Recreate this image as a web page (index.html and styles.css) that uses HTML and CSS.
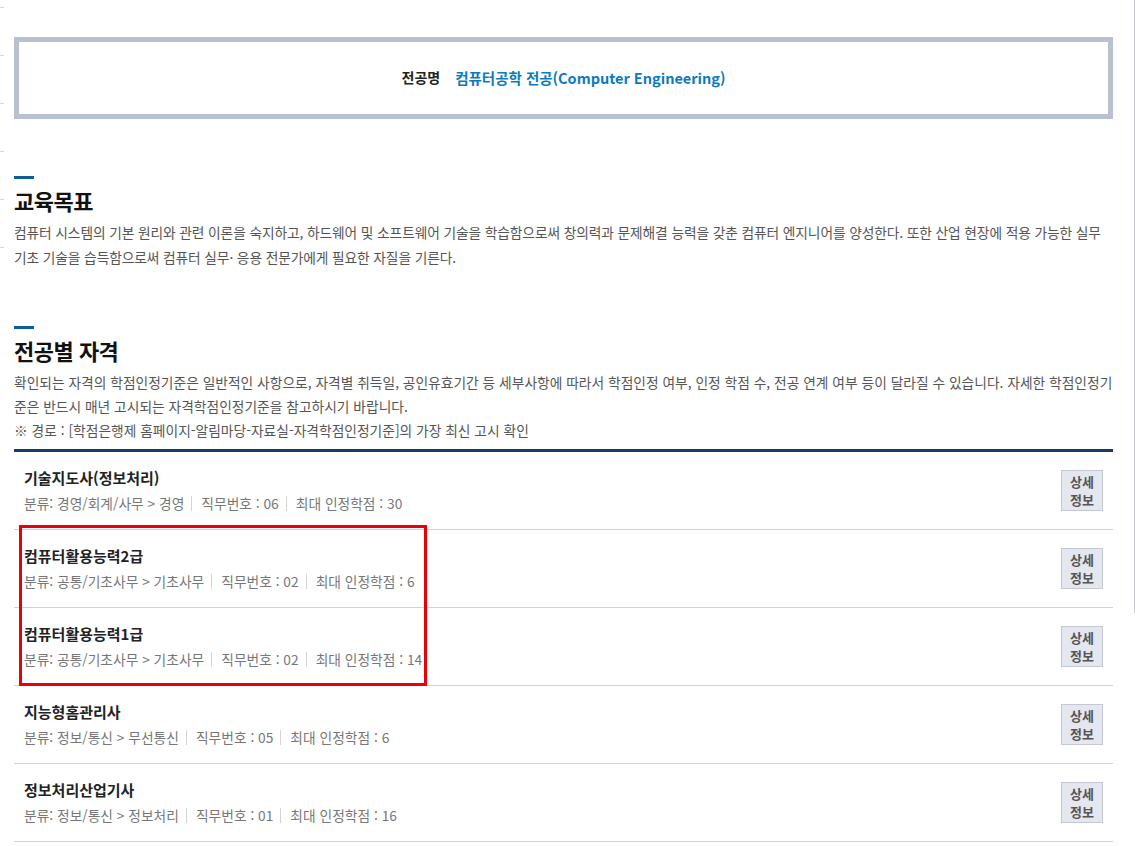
FILE: index.html
```html
<!DOCTYPE html>
<html lang="ko">
<head>
    <meta charset="UTF-8">
    <meta name="viewport" content="width=device-width, initial-scale=1.0">
    <title>전공별 자격</title>
    <link rel="stylesheet" href="styles.css">
</head>
<body>
    <div class="page">
        <div class="edge-ticks"></div>

        <div class="content">
            <div class="major-box">
                <span class="major-label">전공명</span>
                <span class="major-name">컴퓨터공학 전공(Computer Engineering)</span>
            </div>

            <div class="section goal">
                <h2 class="section-title">교육목표</h2>
                <p class="section-text">컴퓨터 시스템의 기본 원리와 관련 이론을 숙지하고, 하드웨어 및 소프트웨어 기술을 학습함으로써 창의력과 문제해결 능력을 갖춘 컴퓨터 엔지니어를 양성한다. 또한 산업 현장에 적용 가능한 실무 기초 기술을 습득함으로써 컴퓨터 실무· 응용 전문가에게 필요한 자질을 기른다.</p>
            </div>

            <div class="section license">
                <h2 class="section-title">전공별 자격</h2>
                <p class="section-text">확인되는 자격의 학점인정기준은 일반적인 사항으로, 자격별 취득일, 공인유효기간 등 세부사항에 따라서 학점인정 여부, 인정 학점 수, 전공 연계 여부 등이 달라질 수 있습니다. 자세한 학점인정기준은 반드시 매년 고시되는 자격학점인정기준을 참고하시기 바랍니다.<br>※ 경로 : [학점은행제 홈페이지-알림마당-자료실-자격학점인정기준]의 가장 최신 고시 확인</p>

                <ul class="cert-list">
                    <li class="cert-item">
                        <div class="cert-info">
                            <strong class="cert-name">기술지도사(정보처리)</strong>
                            <div class="cert-meta">
                                <span>분류: 경영/회계/사무 &gt; 경영</span>
                                <span>직무번호 : 06</span>
                                <span>최대 인정학점 : 30</span>
                            </div>
                        </div>
                        <button type="button" class="detail-btn">상세<br>정보</button>
                    </li>

                    <li class="cert-group">
                        <div class="highlight-mark"></div>
                        <ul class="cert-list-inner">
                            <li class="cert-item">
                                <div class="cert-info">
                                    <strong class="cert-name">컴퓨터활용능력2급</strong>
                                    <div class="cert-meta">
                                        <span>분류: 공통/기초사무 &gt; 기초사무</span>
                                        <span>직무번호 : 02</span>
                                        <span>최대 인정학점 : 6</span>
                                    </div>
                                </div>
                                <button type="button" class="detail-btn">상세<br>정보</button>
                            </li>
                            <li class="cert-item">
                                <div class="cert-info">
                                    <strong class="cert-name">컴퓨터활용능력1급</strong>
                                    <div class="cert-meta">
                                        <span>분류: 공통/기초사무 &gt; 기초사무</span>
                                        <span>직무번호 : 02</span>
                                        <span>최대 인정학점 : 14</span>
                                    </div>
                                </div>
                                <button type="button" class="detail-btn">상세<br>정보</button>
                            </li>
                        </ul>
                    </li>

                    <li class="cert-item">
                        <div class="cert-info">
                            <strong class="cert-name">지능형홈관리사</strong>
                            <div class="cert-meta">
                                <span>분류: 정보/통신 &gt; 무선통신</span>
                                <span>직무번호 : 05</span>
                                <span>최대 인정학점 : 6</span>
                            </div>
                        </div>
                        <button type="button" class="detail-btn">상세<br>정보</button>
                    </li>

                    <li class="cert-item">
                        <div class="cert-info">
                            <strong class="cert-name">정보처리산업기사</strong>
                            <div class="cert-meta">
                                <span>분류: 정보/통신 &gt; 정보처리</span>
                                <span>직무번호 : 01</span>
                                <span>최대 인정학점 : 16</span>
                            </div>
                        </div>
                        <button type="button" class="detail-btn">상세<br>정보</button>
                    </li>
                </ul>
            </div>
        </div>

        <div class="scroll-edge"></div>
    </div>
</body>
</html>
```

FILE: styles.css
```css
* {
    box-sizing: border-box;
}
body {
    margin: 0;
    background: #fff;
    font-family: "Noto Sans CJK KR", "Noto Sans", sans-serif;
    color: #555;
}
.page {
    display: flex;
    align-items: flex-start;
    width: 1135px;
    height: 846px;
    overflow: hidden;
}
.edge-ticks {
    flex: 0 0 4px;
    height: 250px;
    margin-right: 10px;
    background: repeating-linear-gradient(to bottom, transparent 0 7px, #d6d6d6 7px 8px, transparent 8px 48px);
}
.content {
    flex: 0 0 1099px;
    padding-top: 37px;
}
.scroll-edge {
    margin-left: auto;
    flex: 0 0 1px;
    height: 613px;
    background: #c4c9d3;
}
.major-box {
    height: 82px;
    border: 5px solid #b8c1cd;
    display: flex;
    align-items: center;
    justify-content: center;
    gap: 15px;
    font-size: 14px;
    font-weight: bold;
    padding-bottom: 2px;
}
.major-label {
    color: #222;
}
.major-name {
    color: #0b7bc1;
    font-size: 14.5px;
}
.section-title {
    margin: 0;
    padding-top: 8px;
    font-size: 22px;
    line-height: 30px;
    font-weight: bold;
    color: #111;
    letter-spacing: -0.5px;
}
.section-title::before {
    content: "";
    display: block;
    width: 20px;
    height: 3px;
    background: #0b5f96;
    margin-top: -8px;
    margin-bottom: 6px;
}
.goal {
    margin-top: 57px;
}
.license {
    margin-top: 56px;
}
.section-text {
    margin: 5px 0 0;
    font-size: 13.75px;
    line-height: 24px;
    color: #555;
}
.goal .section-text {
    line-height: 25px;
    letter-spacing: -0.12px;
}
.cert-list, .cert-list-inner {
    list-style: none;
    margin: 0;
    padding: 0;
}
.cert-list {
    margin-top: 7px;
    border-top: 3px solid #183a68;
}
.cert-group {
    position: relative;
}
.cert-item {
    display: flex;
    align-items: center;
    justify-content: space-between;
    padding: 15px 10px;
    border-bottom: 1px solid #d2d2d2;
}
.cert-name {
    display: block;
    font-size: 15px;
    line-height: 22px;
    color: #222;
}
.cert-meta {
    margin-top: 3px;
    font-size: 13.75px;
    line-height: 22px;
    color: #777;
    display: flex;
    align-items: center;
}
.cert-meta span + span {
    margin-left: 7px;
    padding-left: 9px;
    border-left: 1px solid #d4d4d4;
    line-height: 15px;
}
.detail-btn {
    width: 42px;
    padding: 2px 0;
    border: 1px solid #c3c8d2;
    background: #e4e7ef;
    color: #555;
    font-family: inherit;
    font-size: 13px;
    font-weight: bold;
    line-height: 17.5px;
    cursor: pointer;
}
.highlight-mark {
    position: absolute;
    top: -5px;
    left: 5px;
    width: 408px;
    height: 161px;
    border: 3px solid #e8000b;
    pointer-events: none;
}
```
